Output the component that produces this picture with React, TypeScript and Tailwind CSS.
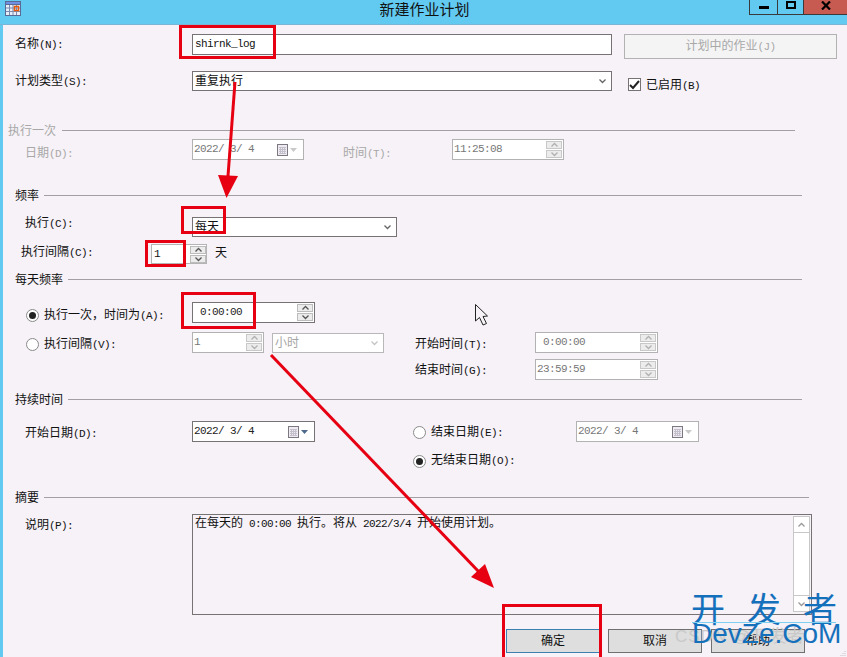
import type { ReactNode } from 'react';

const FONT = 'font-["Liberation_Mono","Noto_Sans_CJK_SC",monospace]';
const LATIN = 'text-[11px] tracking-[-0.6px]';

function En({ children }: { children: ReactNode }) {
  return <span className={LATIN}>{children}</span>;
}

function Label({ zh, en, off, className = '' }: { zh: string; en?: string; off?: boolean; className?: string }) {
  return (
    <span className={`text-[12px] leading-[20px] whitespace-pre ${off ? 'text-[#a8a8a8]' : 'text-[#111]'} ${className}`}>
      {zh}
      {en && <En>{en}</En>}
    </span>
  );
}

function Section({ title, left, gap, width, off, className }: { title: string; left: string; gap: string; width: string; off?: boolean; className: string }) {
  return (
    <div className={`flex items-center h-[13px] ${left} ${width} ${className}`}>
      <span className={`text-[12px] leading-[13px] translate-y-[2px] ${off ? 'text-[#a8a8a8]' : 'text-[#111]'}`}>{title}</span>
      <div className={`flex-1 h-px bg-[#a3a0a3] ${gap}`} />
    </div>
  );
}

function Chevron({ color = '#555', up }: { color?: string; up?: boolean }) {
  return (
    <svg width="9" height="6" viewBox="0 0 9 6" className={up ? 'rotate-180' : ''}>
      <path d="M1.500 1.500l3 3 3-3" fill="none" stroke={color} strokeWidth="1.300" />
    </svg>
  );
}

function Spin({ off }: { off?: boolean }) {
  const c = off ? 'border-[#c8c8c8] bg-[#ececec]' : 'border-[#bcbcbc] bg-[#ececec]';
  const stroke = off ? '#b0b0b0' : '#555';
  return (
    <div className="flex flex-col gap-px">
      <div className={`w-[16px] h-[8px] border flex items-center justify-center ${c}`}><Chevron color={stroke} up /></div>
      <div className={`w-[16px] h-[8px] border flex items-center justify-center ${c}`}><Chevron color={stroke} /></div>
    </div>
  );
}

function TimeField({ value, off, width, className = '', pad = 'pl-[7px]' }: { value: string; off?: boolean; width: string; className?: string; pad?: string }) {
  return (
    <div className={`h-[21px] ${width} border flex items-center justify-between bg-white pr-[1px] ${pad} ${off ? 'border-[#b2b2b2] text-[#777]' : 'border-[#777375] text-[#222]'} ${className}`}>
      <span className={`${LATIN} leading-[19px] whitespace-pre`}>{value}</span>
      <Spin off={off} />
    </div>
  );
}

function Calendar() {
  return (
    <svg width="11" height="12" viewBox="0 0 11 12">
      <rect x="0.500" y="0.500" width="10" height="11" fill="#eeecf2" stroke="#7d7780" />
      <path d="M2 3.500h7M2 5.500h7M2 7.500h7M2 9.500h7M3.500 3v7M5.500 3v7M7.500 3v7" stroke="#c3c0cc" strokeWidth="1" />
    </svg>
  );
}

function DateField({ off, width, className = '' }: { off?: boolean; width: string; className?: string }) {
  return (
    <div className={`h-[21px] ${width} border flex items-center justify-between bg-white pl-[1px] pr-[6px] ${off ? 'border-[#b2b2b2] text-[#777]' : 'border-[#777375] text-[#222]'} ${className}`}>
      <span className={`${LATIN} whitespace-pre`}>2022/ 3/ 4</span>
      <div className="flex items-center gap-[2px]">
        <Calendar />
        <svg width="7" height="4" viewBox="0 0 7 4"><path d="M0 0h7L3.500 4z" fill={off ? '#c9c9c9' : '#4d6a8c'} /></svg>
      </div>
    </div>
  );
}

function Select({ value, off, width, className = '' }: { value: string; off?: boolean; width: string; className?: string }) {
  return (
    <div className={`h-[20px] ${width} border flex items-center justify-between bg-white pl-[2px] pr-[4px] ${off ? 'border-[#b8b8b8] text-[#a5a5a5]' : 'border-[#777375] text-[#111]'} ${className}`}>
      <span className="text-[12px] translate-y-[1px]">{value}</span>
      <Chevron color={off ? '#c4c4c4' : '#666'} />
    </div>
  );
}

function Radio({ on }: { on?: boolean }) {
  return (
    <div className="w-[13px] h-[13px] rounded-full border border-[#8a8a8a] bg-white flex items-center justify-center shrink-0">
      {on && <div className="w-[7px] h-[7px] rounded-full bg-[#222]" />}
    </div>
  );
}

function Btn({ children, primary, className = '' }: { children: ReactNode; primary?: boolean; className?: string }) {
  return (
    <div className={`w-[94px] h-[24px] border bg-[#dedede] flex items-center justify-center text-[12px] text-[#111] ${primary ? 'border-[#3c7fb1]' : 'border-[#707070]'} ${className}`}>
      <span className="translate-y-[1px]">{children}</span>
    </div>
  );
}

function Annotations() {
  const red = '#e60012';
  return (
    <svg width="847" height="657" viewBox="0 0 847 657" className="absolute inset-0 pointer-events-none">
      <g fill="none" stroke={red} strokeWidth="3">
        <rect x="180.500" y="26.500" width="94" height="31" />
        <rect x="182.500" y="207.500" width="42" height="25" />
        <rect x="146.500" y="241.500" width="38" height="24" />
        <rect x="182.500" y="293.500" width="72" height="34" />
        <rect x="503.500" y="605.500" width="97" height="55" />
        <path d="M235 82L228 176" />
        <path d="M271 355L480 573" />
      </g>
      <path d="M218 175L238 176L226.500 198z" fill={red} />
      <path d="M471 577L485 564L494 588z" fill={red} />
      <path d="M475.500 304.500V321L479.500 317.500L483 325L486.500 323.500L483 316.500L487.500 316z" fill="#f6f2f7" stroke="#222" strokeWidth="1" />
      <path d="M845 651v1M843 653v1M845 653v1M841 655v1M843 655v1M845 655v1" stroke="#c4c4c4" strokeWidth="1" />
    </svg>
  );
}

function Watermark() {
  return (
    <div className="absolute left-[660px] top-[585px] w-[187px] h-[72px] pointer-events-none">
      <div className="absolute left-[15px] top-[41px] [font-family:'Liberation_Sans','Noto_Sans_CJK_SC',sans-serif] text-[17px] leading-[22px] tracking-[1px] text-[#c9c9c9] whitespace-pre">CSDN @开发者</div>
      <div className="absolute left-[31px] top-[4px] flex gap-[22px] [font-family:'Noto_Sans_CJK_SC',sans-serif] text-[34px] leading-[38px] text-[#1570bc]">
        <span>开</span>
        <span>发</span>
        <span>者</span>
      </div>
      <div className="absolute left-[32px] top-[37px] w-[144px] h-px bg-[#7fd0ee]" />
      <div className="absolute left-[32px] top-[32px] [font-family:'Liberation_Sans',sans-serif] text-[28px] leading-[34px] text-[#1570bc] whitespace-pre">DevZe.CoM</div>
    </div>
  );
}

export default function App() {
  return (
    <div className={`relative w-[847px] h-[657px] overflow-hidden bg-[#f6f2f7] ${FONT}`}>
      <header className="relative h-[25px] bg-[#62caf1] border-b border-[#7ab5d6] flex justify-center">
        <svg width="16" height="16" viewBox="0 0 16 16" className="absolute left-[5px] top-[1px]">
          <rect x="0" y="0" width="16" height="15" fill="#5a6a96" />
          <rect x="1" y="1" width="14" height="2" fill="#6f8fe0" />
          <path d="M1 4h14v10H1z" fill="#e8eef8" />
          <path d="M4.500 4v10M8 4v10M11.500 4v10M1 7h14M1 10.500h14" stroke="#7b8bb0" strokeWidth="1" />
          <rect x="9.500" y="5.500" width="4" height="4" fill="none" stroke="#e8590c" strokeWidth="1.500" />
        </svg>
        <span className="text-[15px] leading-[20px] text-[#111] translate-x-[1px] translate-y-[2px]">新建作业计划</span>
        <div className="absolute right-0 top-0 flex h-[15px] border-b border-[#3a3a3a]">
          <div className="w-[29px] border-x border-[#3a3a3a] flex items-center justify-center">
            <div className="w-[10px] h-[3px] mt-[1px] bg-black" />
          </div>
          <div className="w-[26px] border-r border-[#3a3a3a] flex items-start justify-center">
            <div className="w-[10px] h-[8px] mt-[1px] border-2 border-black" />
          </div>
          <div className="w-[43px] bg-[#c75b52] flex items-start justify-center">
            <svg width="10" height="9" viewBox="0 0 10 9" className="mt-[1px]"><path d="M1 0.500L9 8.500M9 0.500L1 8.500" stroke="#000" strokeWidth="2.200" /></svg>
          </div>
        </div>
      </header>

      <main className="h-[632px] border-l-[3px] border-[#62caf1] flex flex-col">
        <div className="flex items-start mt-[9px] h-[25px]">
          <Label zh="名称" en="(N):" className="pl-[12px] w-[189px] translate-y-[1px]" />
          <div className={`w-[420px] h-[21px] bg-white border border-[#777375] pl-[2px] ${LATIN} leading-[19px] text-[#111]`}>shirnk_log</div>
          <div className="ml-[12px] w-[213px] h-[25px] border border-[#b2b2b2] bg-[#f4f4f4] flex items-center justify-center">
            <Label zh="计划中的作业" en="(J)" off />
          </div>
        </div>

        <div className="flex items-center mt-[12px] h-[20px]">
          <Label zh="计划类型" en="(S):" className="pl-[12px] w-[189px] translate-y-[1px]" />
          <Select value="重复执行" width="w-[420px]" />
          <div className="ml-[16px] mt-[7px] w-[13px] h-[13px] border border-[#777375] bg-white flex items-center justify-center">
            <svg width="11" height="10" viewBox="0 0 11 10"><path d="M1 5l3 3 6-7" fill="none" stroke="#222" strokeWidth="2" /></svg>
          </div>
          <Label zh="已启用" en="(B)" className="ml-[5px] mt-[7px] translate-y-[1px]" />
        </div>

        <Section title="执行一次" off left="ml-[5px]" gap="ml-[6px]" width="w-[787px]" className="mt-[33px]" />

        <div className="flex items-center mt-[2px] h-[21px]">
          <Label zh="日期" en="(D):" off className="pl-[22px] w-[189px] translate-y-[4px]" />
          <DateField off width="w-[112px]" />
          <Label zh="时间" en="(T):" off className="ml-[39px] w-[109px] translate-y-[4px]" />
          <TimeField value="11:25:08" off width="w-[112px]" pad="pl-[1px]" />
        </div>

        <Section title="频率" left="ml-[12px]" gap="ml-[5px]" width="w-[787px]" className="mt-[29px]" />

        <div className="flex items-center mt-[15px] h-[20px]">
          <Label zh="执行" en="(C):" className="pl-[22px] w-[189px] -translate-y-[3px]" />
          <Select value="每天" width="w-[205px]" />
        </div>

        <div className="flex items-center mt-[7px] h-[20px]">
          <Label zh="执行间隔" en="(C):" className="pl-[18px] w-[148px] -translate-y-[1px]" />
          <div className="w-[56px] h-[20px] border border-[#b4b4b4] bg-white flex items-center justify-between pl-[2px]">
            <span className={`${LATIN} text-[#111]`}>1</span>
            <Spin />
          </div>
          <Label zh="天" className="ml-[8px]" />
        </div>

        <Section title="每天频率" left="ml-[12px]" gap="ml-[5px]" width="w-[787px]" className="mt-[9px]" />

        <div className="flex items-center mt-[16px] h-[21px]">
          <div className="flex items-center gap-[5px] pl-[23px] w-[189px] translate-y-[3px]">
            <Radio on />
            <Label zh="执行一次，时间为" en="(A):" />
          </div>
          <TimeField value="0:00:00" width="w-[123px]" />
        </div>

        <div className="flex items-center mt-[9px] h-[21px]">
          <div className="flex items-center gap-[5px] pl-[23px] w-[189px] translate-y-[2px]">
            <Radio />
            <Label zh="执行间隔" en="(V):" />
          </div>
          <TimeField value="1" off width="w-[72px]" pad="pl-[1px]" />
          <Select value="小时" off width="w-[112px]" className="ml-[8px]" />
          <Label zh="开始时间" en="(T):" className="ml-[31px] w-[120px] translate-y-[2px]" />
          <TimeField value="0:00:00" off width="w-[123px]" />
        </div>

        <div className="flex items-center mt-[6px] h-[21px]">
          <Label zh="结束时间" en="(G):" className="ml-[412px] w-[120px] translate-y-[1px]" />
          <TimeField value="23:59:59" off width="w-[123px]" pad="pl-[1px]" />
        </div>

        <Section title="持续时间" left="ml-[12px]" gap="ml-[5px]" width="w-[787px]" className="mt-[13px]" />

        <div className="flex items-center mt-[15px] h-[21px]">
          <Label zh="开始日期" en="(D):" className="pl-[22px] w-[189px] translate-y-[2px]" />
          <DateField width="w-[123px]" />
          <div className="flex items-center gap-[5px] ml-[98px] w-[163px] translate-y-[1px]">
            <Radio />
            <Label zh="结束日期" en="(E):" />
          </div>
          <DateField off width="w-[123px]" />
        </div>

        <div className="flex items-center gap-[5px] mt-[8px] h-[20px] ml-[410px] translate-y-[1px]">
          <Radio on />
          <Label zh="无结束日期" en="(O):" />
        </div>

        <Section title="摘要" left="ml-[12px]" gap="ml-[5px]" width="w-[794px]" className="mt-[21px]" />

        <div className="flex items-start mt-[10px] h-[101px]">
          <Label zh="说明" en="(P):" className="pl-[22px] w-[189px] pt-[2px]" />
          <div className="w-[620px] h-[101px] border border-[#777375] flex justify-between pl-[2px] pt-[1px] pr-[1px] pb-[1px]">
            <span className="text-[12px] leading-[16px] text-[#111] whitespace-pre">在每天的<En> 0:00:00 </En>执行。将从<En> 2022/3/4 </En>开始使用计划。</span>
            <div className="w-[17px] h-[96px] border border-[#c8c8c8] bg-white flex flex-col justify-between">
              <div className="h-[16px] border-b border-[#c8c8c8] flex items-center justify-center"><Chevron color="#999" up /></div>
              <div className="h-[16px] border-t border-[#c8c8c8] flex items-center justify-center"><Chevron color="#999" /></div>
            </div>
          </div>
        </div>

        <div className="flex mt-[14px] ml-[503px] gap-[8px]">
          <Btn primary>确定</Btn>
          <Btn>取消</Btn>
          <Btn className="ml-[1px]">帮助</Btn>
        </div>
      </main>

      <Watermark />
      <Annotations />
    </div>
  );
}
